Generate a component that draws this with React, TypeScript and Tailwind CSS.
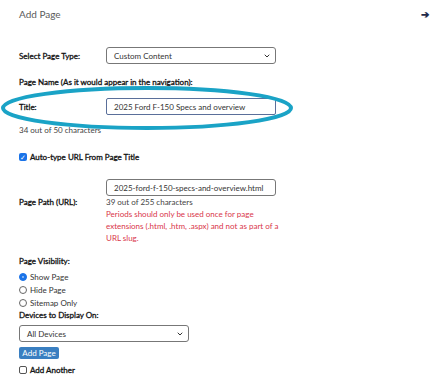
import { ChevronDown } from "lucide-react"

const label = "text-[8px] text-[#111] [-webkit-text-stroke:0.3px_#111]"

function Row({ text, children }: { text: string; children: React.ReactNode }) {
  return (
    <div className="flex items-center">
      <div className={`w-[87px] ${label}`}>{text}</div>
      {children}
    </div>
  )
}

function SelectBox({ value }: { value: string }) {
  return (
    <div className="w-[170px] h-[17px] flex items-center justify-between rounded-[3px] border border-[#777] bg-white pl-[7px] pr-[4px] text-[8px] text-[#333]">
      <span>{value}</span>
      <ChevronDown className="h-[8px] w-[8px] text-[#333]" strokeWidth={3} />
    </div>
  )
}

function Radio({ text, checked }: { text: string; checked?: boolean }) {
  return (
    <div className="flex items-center gap-[3px] h-[13px] text-[8px] text-[#333]">
      {checked ? (
        <span className="h-[8px] w-[8px] rounded-full bg-[#1a73e8] border border-[#1a73e8] flex items-center justify-center">
          <span className="h-[2px] w-[2px] rounded-full bg-[#9cc3f5]" />
        </span>
      ) : (
        <span className="h-[8px] w-[8px] rounded-full border border-[#666] bg-white" />
      )}
      {text}
    </div>
  )
}

export default function App() {
  return (
    <div className="relative h-[391px] w-[434px] overflow-hidden bg-white font-['Lato',sans-serif]">
      <div className="flex h-[14px] items-center justify-between pl-[19px] pr-[5px] mt-[7px]">
        <h2 className="text-[10px] text-[#5a5a5a]">Add Page</h2>
        <span className="text-[10px] font-bold text-[#1e2a4a]">➔</span>
      </div>

      <div className="pl-[19px] pt-[26px] leading-[12px]">
        <Row text="Select Page Type:">
          <SelectBox value="Custom Content" />
        </Row>

        <div className={`mt-[12px] ${label}`}>Page Name (As it would appear in the navigation):</div>

        <div className="mt-[10px]">
          <Row text="Title:">
            <div className="w-[170px] h-[17px] flex items-center rounded-[2px] border border-[#5a6f9a] bg-white px-[7px] text-[8px] text-[#333]">
              2025 Ford F-150 Specs and overview
            </div>
          </Row>
        </div>

        <div className="mt-[9px] text-[8px] text-[#444]">34 out of 50 characters</div>

        <div className={`mt-[15px] flex h-[12px] items-center gap-[3px] ${label}`}>
          <span className="h-[8px] w-[8px] rounded-[2px] bg-[#1a73e8] flex items-center justify-center text-white text-[7px] leading-none [-webkit-text-stroke:0]">
            ✓
          </span>
          Auto-type URL From Page Title
        </div>

        <div className="mt-[16px] flex">
          <div className={`w-[87px] pt-[17px] ${label}`}>Page Path (URL):</div>
          <div className="w-[174px]">
            <div className="w-[170px] h-[17px] flex items-center rounded-[3px] border border-[#777] bg-white px-[7px] text-[8px] text-[#333]">
              2025-ford-f-150-specs-and-overview.html
            </div>
            <div className="text-[8px] text-[#444]">39 out of 255 characters</div>
            <div className="text-[8px] text-[#d9364a]">
              Periods should only be used once for page extensions (.html, .htm, .aspx) and not as part of a URL slug.
            </div>
          </div>
        </div>

        <div className={`mt-[11px] ${label}`}>Page Visibility:</div>
        <div className="mt-[3px]">
          <Radio text="Show Page" checked />
          <Radio text="Hide Page" />
          <Radio text="Sitemap Only" />
        </div>
        <div className={label}>Devices to Display On:</div>

        <div className="mt-[4px]">
          <SelectBox value="All Devices" />
        </div>

        <button className="mt-[5px] block h-[12px] w-[40px] rounded-[2px] bg-[#3a7fc1] text-[8px] leading-[12px] text-white">
          Add Page
        </button>

        <div className={`mt-[5px] flex h-[12px] items-center gap-[3px] ${label}`}>
          <span className="h-[8px] w-[8px] rounded-[2px] border border-[#555] bg-white" />
          Add Another
        </div>
      </div>

      <svg className="absolute left-0 top-0 pointer-events-none" width="434" height="391">
        <ellipse cx="147" cy="108" rx="144" ry="20" fill="none" stroke="#1aa3c6" strokeWidth="4" />
      </svg>
    </div>
  )
}
